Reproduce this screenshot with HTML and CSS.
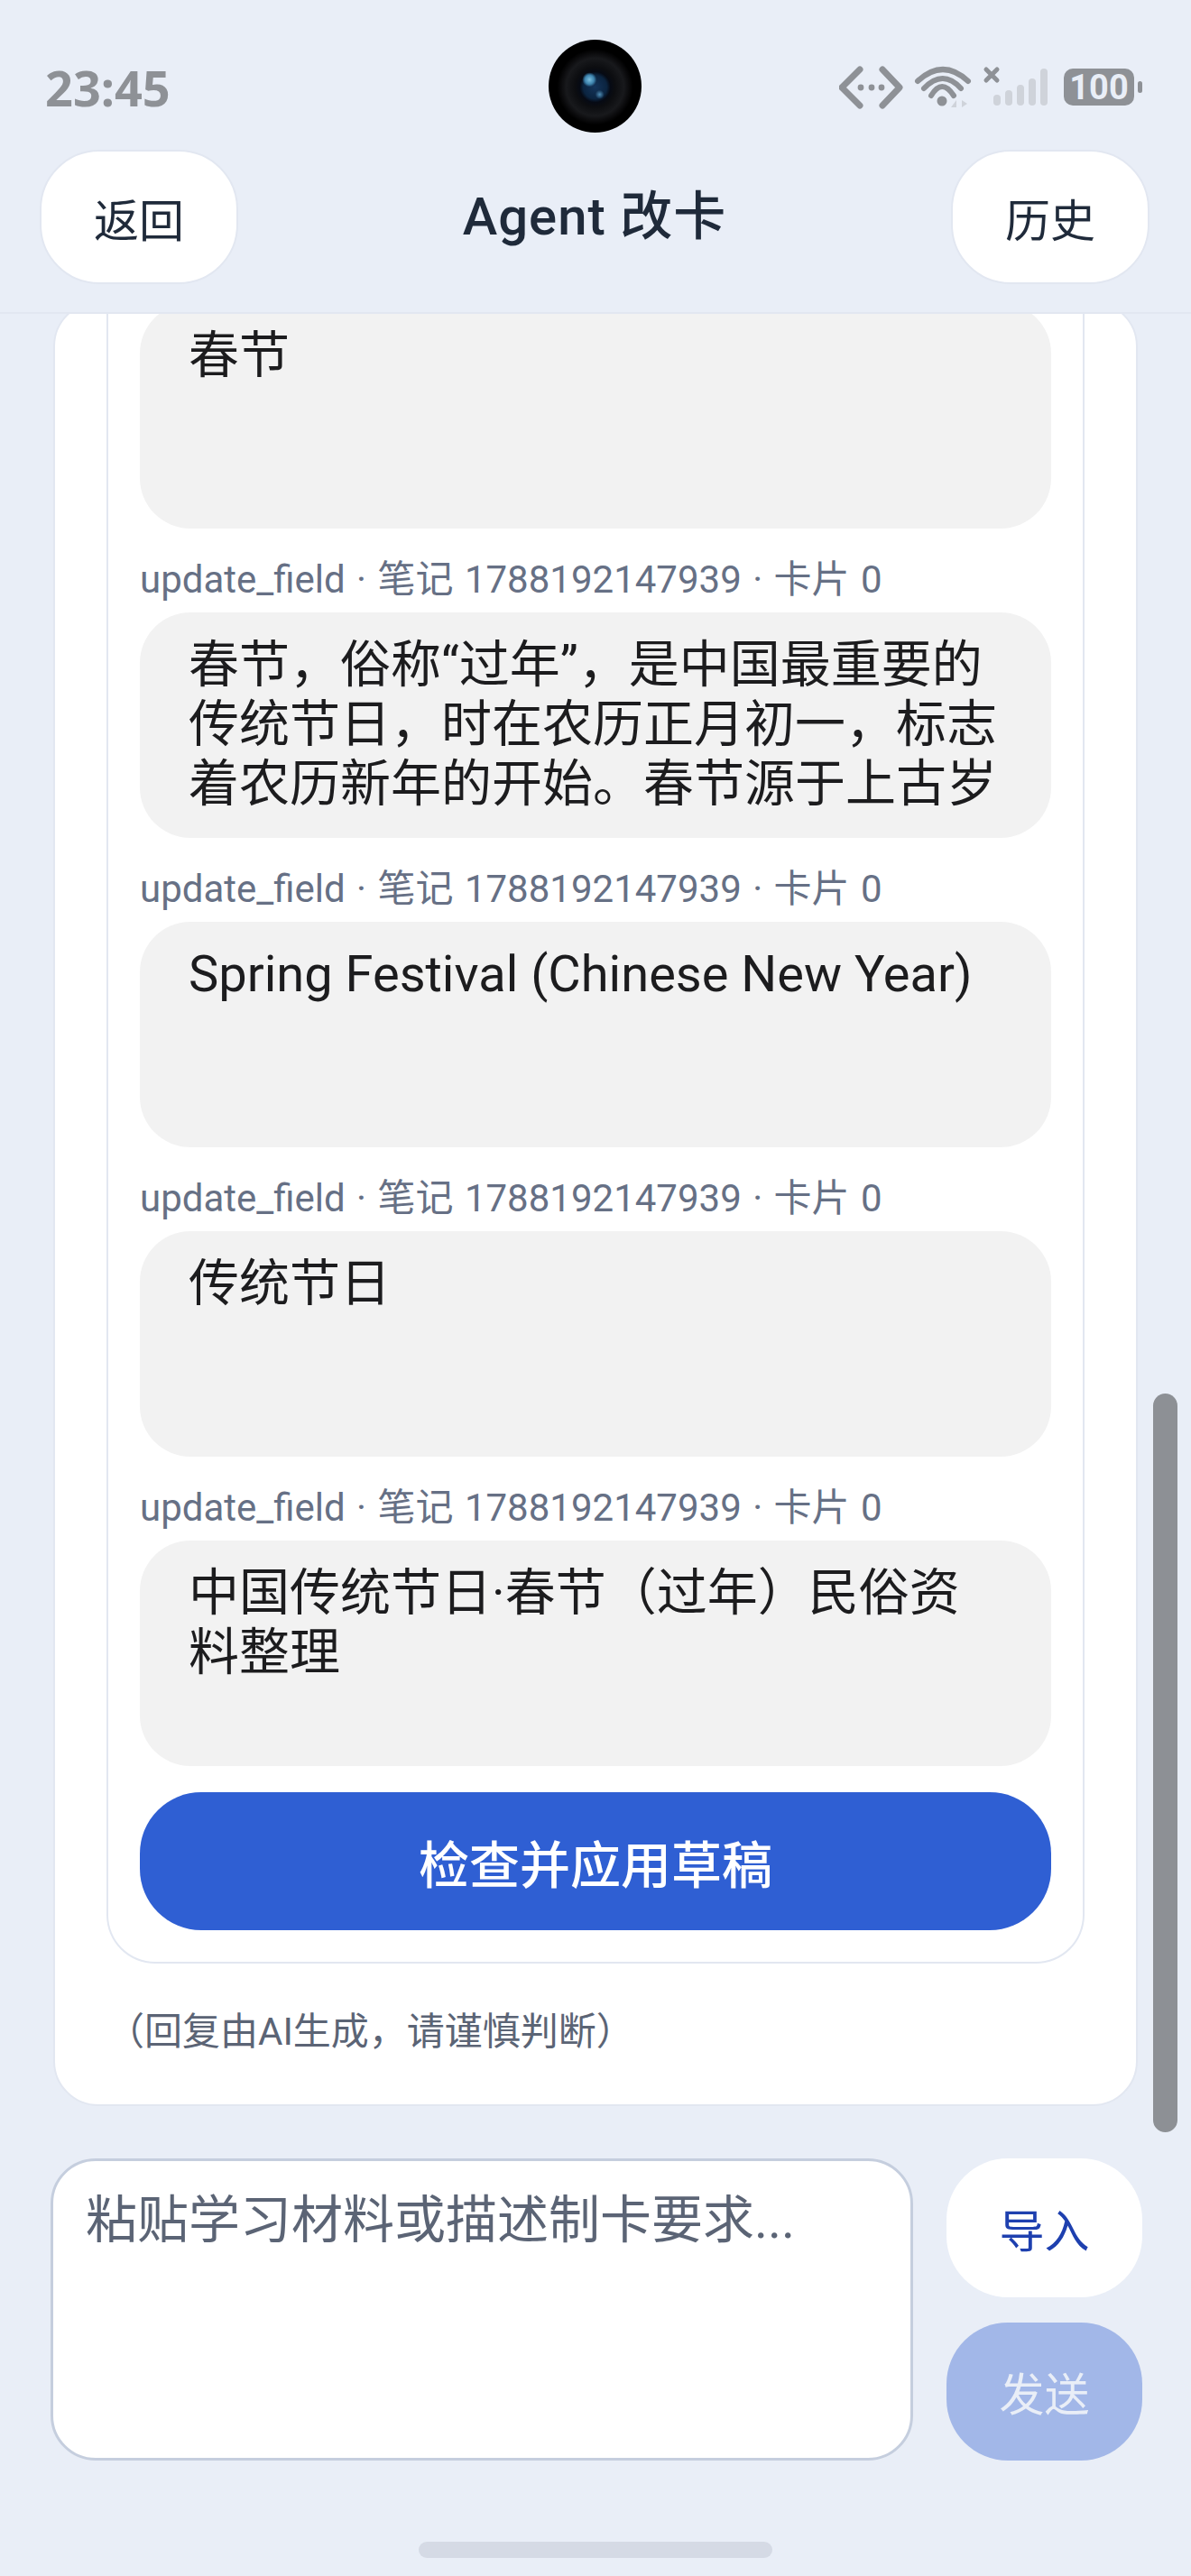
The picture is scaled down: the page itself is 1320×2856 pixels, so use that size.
FILE: index.html
```html
<!DOCTYPE html>
<html lang="zh-CN">
<head>
<meta charset="utf-8">
<title>Agent 改卡</title>
<link rel="stylesheet" href="styles.css">
</head>
<body>
<div class="app">
  <header class="header">
    <div class="statusbar">
      <span class="time">23:45</span>
      <svg class="status-icons" width="340" height="50" viewBox="0 0 340 50">
        <g fill="none" stroke="#8e9196" stroke-linecap="round" stroke-linejoin="round">
          <path stroke-width="7" d="M23 5 L3 25 L23 45"/>
          <path stroke-width="7" d="M48 5 L67 25 L48 45"/>
          <path stroke-width="6" d="M87 18 Q115 -8 143 18"/>
          <path stroke-width="6" d="M94 26 Q115 4 135 26"/>
          <path stroke-width="6" d="M102 34 Q114 14 127 34"/>
          <path stroke-width="5" d="M163 5 L175 17 M175 5 L163 17"/>
        </g>
        <g fill="#8e9196">
          <circle cx="24" cy="25" r="3.4"/><circle cx="36" cy="25" r="3.4"/><circle cx="47" cy="25" r="3.4"/>
          <circle cx="114" cy="40" r="5.5"/>
          <rect x="249" y="4" width="78" height="41" rx="10"/>
          <rect x="331" y="18" width="5" height="13" rx="2.5"/>
        </g>
        <g fill="#cfd3da">
          <path d="M130 39 V47 H124Z M136 39 L142 43 L136 47Z"/>
          <rect x="171" y="33" width="8" height="12" rx="4"/>
          <rect x="184" y="28" width="8" height="17" rx="4"/>
          <rect x="197" y="22" width="8" height="23" rx="4"/>
          <rect x="210" y="15" width="8" height="30" rx="4"/>
          <rect x="223" y="4" width="8" height="41" rx="4"/>
        </g>
        <text class="battery-text" x="288" y="38" text-anchor="middle">100</text>
      </svg>
      <div class="camera"></div>
    </div>
    <nav class="nav">
      <button class="pill">返回</button>
      <h1 class="title">Agent 改卡</h1>
      <button class="pill">历史</button>
    </nav>
  </header>

  <main class="scroll">
    <section class="card">
      <div class="drafts">
        <div class="field"><div class="value">春节</div></div>

        <div class="label">update_field · 笔记 1788192147939 · 卡片 0</div>
        <div class="field"><div class="value">春节，俗称“过年”，是中国最重要的传统节日，时在农历正月初一，标志着农历新年的开始。春节源于上古岁</div></div>

        <div class="label">update_field · 笔记 1788192147939 · 卡片 0</div>
        <div class="field"><div class="value">Spring Festival (Chinese New Year)</div></div>

        <div class="label">update_field · 笔记 1788192147939 · 卡片 0</div>
        <div class="field"><div class="value">传统节日</div></div>

        <div class="label">update_field · 笔记 1788192147939 · 卡片 0</div>
        <div class="field"><div class="value">中国传统节日·春节（过年）民俗资料整理</div></div>

        <button class="apply">检查并应用草稿</button>
      </div>
      <p class="note">（回复由AI生成，请谨慎判断）</p>
    </section>
    <div class="scrollbar"></div>
  </main>

  <footer class="composer">
    <div class="input">粘贴学习材料或描述制卡要求...</div>
    <div class="actions">
      <button class="round import">导入</button>
      <button class="round send">发送</button>
    </div>
  </footer>
  <div class="home"></div>
</div>
</body>
</html>
```
FILE: styles.css
```css
* { box-sizing: border-box; }
html, body { margin: 0; padding: 0; }
body {
  width: 1320px;
  height: 2856px;
  overflow: hidden;
  background: #e9eef7;
  font-family: Roboto, "Noto Sans CJK SC", sans-serif;
}
button { font-family: inherit; border: 0; padding: 0; }
.app { height: 2856px; display: flex; flex-direction: column; }

.header {
  position: relative;
  z-index: 2;
  height: 348px;
  flex: none;
  background: #e9eef7;
  border-bottom: 2px solid #e2e7f1;
}
.statusbar {
  position: relative;
  height: 166px;
  padding: 72px 50px 0 50px;
  display: flex;
  justify-content: space-between;
  align-items: flex-start;
}
.time {
  font-family: "Noto Sans", sans-serif;
  font-size: 54px;
  line-height: 50px;
  font-weight: 700;
  color: #8e9196;
}
.battery-text { font-family: Roboto, sans-serif; font-size: 38px; font-weight: 700; fill: #e9eef7; }
.camera {
  position: absolute;
  left: 608px;
  top: 44px;
  width: 103px;
  height: 103px;
  border-radius: 50%;
  background:
    radial-gradient(circle at 44% 43%, #7cc0e0 0, #3d83ad 5px, transparent 8px),
    radial-gradient(circle at 55% 59%, #4f8db5 0, transparent 5px),
    radial-gradient(circle at 50% 51%, #14345a 0, #0b2440 13px, #060a14 17px, #0c0d10 22px, #18191c 32px, #0c0c0e 37px, #000 42px);
}
.nav {
  height: 149px;
  padding: 0 46px 0 44px;
  display: flex;
  justify-content: space-between;
  align-items: center;
}
.title {
  margin: 0;
  font-size: 58px;
  line-height: 149px;
  font-weight: 500;
  letter-spacing: 1px;
  color: #1f2a3a;
}
.pill {
  width: 220px;
  height: 149px;
  border-radius: 66px;
  background: #fff;
  border: 2px solid #e2e7f1;
  font-size: 50px;
  color: #1f2a3a;
}

.scroll {
  position: relative;
  flex: 1;
  min-height: 0;
  overflow: hidden;
  display: flex;
  flex-direction: column;
  justify-content: flex-end;
  padding: 0 59px 58px;
}
.card {
  flex: none;
  background: #fff;
  border: 2px solid #e2e7f1;
  border-radius: 50px;
  padding: 0 57px 0;
}
.drafts {
  background: #fff;
  border: 2px solid #e2e7f1;
  border-top: 0;
  border-radius: 0 0 54px 54px;
  padding: 0 35px 35px;
  display: flex;
  flex-direction: column;
}
.label {
  height: 93px;
  padding-top: 32px;
  font-size: 42px;
  line-height: 50px;
  word-spacing: 2px;
  color: #667085;
  white-space: nowrap;
}
.field {
  height: 250px;
  background: #f2f2f2;
  border-radius: 56px;
  padding: 25px 54px;
  flex: none;
  overflow: hidden;
}
.value {
  font-size: 56px;
  line-height: 66px;
  color: #1c1c1e;
}
.apply {
  margin-top: 29px;
  height: 153px;
  border-radius: 68px;
  background: #2f5fd3;
  color: #fff;
  font-size: 56px;
  font-weight: 500;
}
.note {
  margin: 0;
  height: 156px;
  padding: 46px 0 0 0;
  font-size: 42px;
  line-height: 60px;
  color: #5b6475;
}
.scrollbar {
  position: absolute;
  right: 15px;
  bottom: 29px;
  width: 27px;
  height: 819px;
  border-radius: 14px;
  background: #8d9095;
}

.composer {
  flex: none;
  height: 335px;
  padding: 0 54px 0 56px;
  display: flex;
  gap: 37px;
}
.input {
  flex: 1;
  background: #fff;
  border: 3px solid #c5cede;
  border-radius: 50px;
  padding: 33px 36px;
  font-size: 57px;
  line-height: 66px;
  color: #5b6475;
}
.actions { width: 217px; display: flex; flex-direction: column; gap: 28px; }
.round {
  height: 154px;
  border-radius: 68px;
  font-size: 50px;
}
.import { background: #fff; color: #1e40af; }
.send { background: #a2b7e8; color: #e9eef7; }
.home {
  flex: none;
  width: 392px;
  height: 18px;
  margin: 90px auto 20px;
  border-radius: 9px;
  background: #d5dae5;
}
```
